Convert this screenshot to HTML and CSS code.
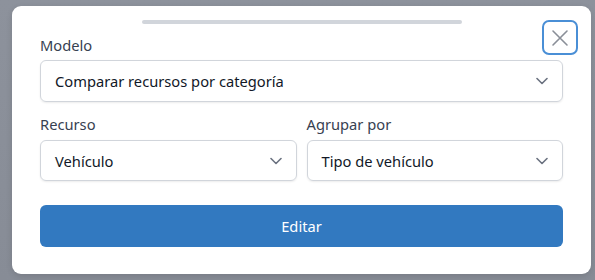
FILE: index.html
```html
<!DOCTYPE html>
<html lang="es">
<head>
<meta charset="utf-8">
<title>Editar modelo</title>
<link rel="stylesheet" href="styles.css">
</head>
<body>
<div class="sheet">
  <div class="handle"></div>
  <button class="close" aria-label="Cerrar">
    <svg width="18" height="18" viewBox="0 0 18 18"><path d="M2 2L16 16M16 2L2 16" stroke="#8a8f98" stroke-width="1.6" stroke-linecap="round" fill="none"/></svg>
  </button>
  <div class="field first">
    <div class="label">Modelo</div>
    <div class="select"><span>Comparar recursos por categoría</span><svg class="chev" width="12" height="8" viewBox="0 0 12 8"><path d="M1 1.5L6 6.5L11 1.5" stroke="#6b7280" stroke-width="1.6" fill="none" stroke-linecap="round" stroke-linejoin="round"/></svg></div>
  </div>
  <div class="row">
    <div class="field">
      <div class="label">Recurso</div>
      <div class="select"><span>Vehículo</span><svg class="chev" width="12" height="8" viewBox="0 0 12 8"><path d="M1 1.5L6 6.5L11 1.5" stroke="#6b7280" stroke-width="1.6" fill="none" stroke-linecap="round" stroke-linejoin="round"/></svg></div>
    </div>
    <div class="field">
      <div class="label">Agrupar por</div>
      <div class="select"><span>Tipo de vehículo</span><svg class="chev" width="12" height="8" viewBox="0 0 12 8"><path d="M1 1.5L6 6.5L11 1.5" stroke="#6b7280" stroke-width="1.6" fill="none" stroke-linecap="round" stroke-linejoin="round"/></svg></div>
    </div>
  </div>
  <button class="primary">Editar</button>
</div>
</body>
</html>
```
FILE: styles.css
```css
html, body {
  margin: 0;
  padding: 0;
}
body {
  width: 595px;
  height: 280px;
  background: linear-gradient(180deg, #8d929c 0%, #878c96 100%);
  font-family: "Noto Sans", "Open Sans", sans-serif;
  overflow: hidden;
}
.sheet {
  position: relative;
  box-sizing: border-box;
  margin: 6px 0 0 12px;
  width: 579px;
  height: 268px;
  background: #ffffff;
  border-radius: 9px;
  padding: 14px 28px 0 28px;
  box-shadow: 0 2px 6px rgba(0,0,0,0.12);
}
.handle {
  width: 320px;
  height: 4px;
  border-radius: 2px;
  background: #d1d5db;
  margin: 0 auto;
}
.close {
  position: absolute;
  top: 14px;
  right: 13px;
  width: 36px;
  height: 35px;
  box-sizing: border-box;
  border: 2px solid #4a8fd6;
  border-radius: 7px;
  background: #fff;
  display: flex;
  align-items: center;
  justify-content: center;
  padding: 0;
}
.field {
  display: flex;
  flex-direction: column;
  gap: 6px;
  margin-top: 12px;
}
.field.first {
  gap: 5px;
  margin-top: 11px;
}
.label {
  font-size: 14.7px;
  line-height: 20px;
  color: #374151;
}
.select {
  box-sizing: border-box;
  height: 42px;
  border: 1px solid #d1d5db;
  border-radius: 6px;
  box-shadow: 0 1px 2px rgba(0,0,0,0.08);
  display: flex;
  align-items: center;
  justify-content: space-between;
  padding: 0 14px 0 14px;
  font-size: 14.7px;
  color: #111827;
}
.row {
  display: grid;
  grid-template-columns: 1fr 1fr;
  gap: 10px;
}
.row .select {
  height: 41px;
}
.primary {
  display: block;
  width: 100%;
  height: 42px;
  margin-top: 24px;
  border: none;
  border-radius: 6px;
  background: #3279c0;
  color: #ffffff;
  font-family: inherit;
  font-size: 14.7px;
  padding: 0;
}
```
